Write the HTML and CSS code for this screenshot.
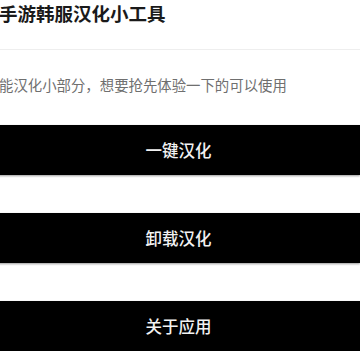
FILE: index.html
```html
<!DOCTYPE html>
<html lang="zh-CN">
<head>
    <meta charset="UTF-8">
    <meta name="viewport" content="width=device-width, initial-scale=1.0">
    <title>手游韩服汉化小工具</title>
    <link rel="stylesheet" href="styles.css">
</head>
<body>
    <div class="page">
        <div class="header">
            <div class="title">手游韩服汉化小工具</div>
        </div>
        <p class="desc">能汉化小部分，想要抢先体验一下的可以使用</p>
        <div class="actions">
            <button class="action-btn">一键汉化</button>
            <button class="action-btn">卸载汉化</button>
            <button class="action-btn">关于应用</button>
        </div>
    </div>
</body>
</html>
```

FILE: styles.css
```css
body {
    margin: 0;
    padding: 0;
    background: #fff;
    font-family: "Noto Sans CJK SC", "Noto Sans", sans-serif;
    overflow: hidden;
}
.page {
    width: 363px;
    margin-left: -3px;
}
.header {
    height: 49px;
    border-bottom: 1px solid #eeeeee;
}
.title {
    padding-left: 2px;
    font-size: 18.5px;
    font-weight: bold;
    line-height: 27px;
    color: #1a1a1a;
}
.desc {
    margin: 25px 0 0 0;
    padding-left: 2px;
    font-size: 14.4px;
    line-height: 20px;
    color: #6f6f6f;
    white-space: nowrap;
}
.actions {
    display: flex;
    flex-direction: column;
    gap: 38px;
    margin-top: 30px;
}
.action-btn {
    display: block;
    width: 100%;
    height: 50px;
    border: none;
    border-radius: 0;
    background-color: #000;
    color: #f2f2f2;
    font-family: inherit;
    font-size: 16.5px;
    font-weight: 500;
    box-shadow: 0 1px 2px rgba(0, 0, 0, 0.4);
    cursor: pointer;
}
```
